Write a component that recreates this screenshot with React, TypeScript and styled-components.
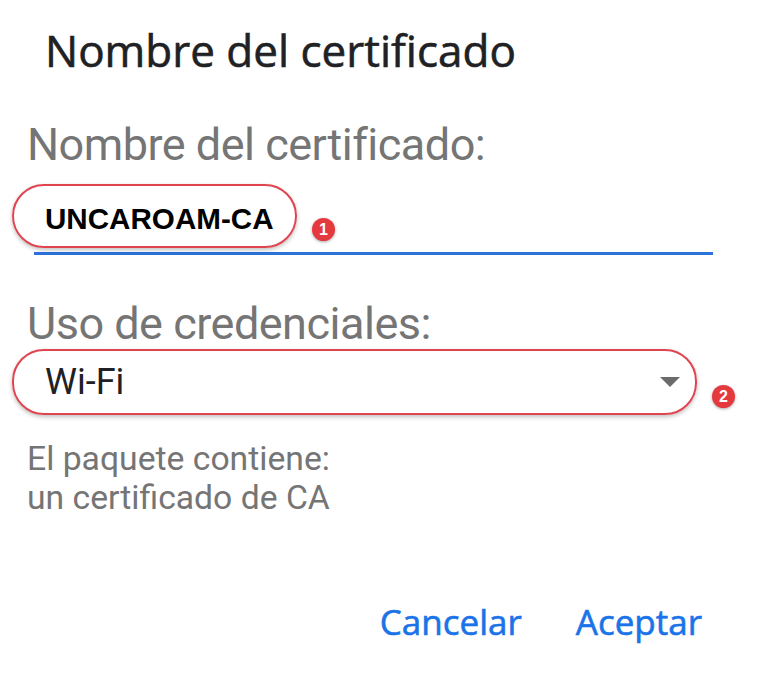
import React from "react";
import styled, { createGlobalStyle } from "styled-components";

const Global = createGlobalStyle`
  html, body { margin: 0; padding: 0; background: #ffffff; }
  body { font-family: Roboto, "Noto Sans", sans-serif; }
`;

const Dialog = styled.div`
  width: 766px;
  height: 673px;
  box-sizing: border-box;
  padding: 22px 0 0 27px;
  display: flex;
  flex-direction: column;
  background: #ffffff;
`;

const Title = styled.h1`
  margin: 0 0 0 18px;
  font-family: "Open Sans", Roboto, sans-serif;
  font-weight: 400;
  font-size: 44px;
  line-height: 56px;
  color: #202124;
  -webkit-text-stroke: 0.6px #202124;
`;

const Label = styled.div<{ $top: number }>`
  margin-top: ${(p) => p.$top}px;
  font-size: 45px;
  line-height: 50px;
  letter-spacing: -0.5px;
  color: #757575;
  font-weight: 400;
`;

const Overlay = styled.div`
  position: relative;
`;

const InputField = styled.div`
  position: relative;
  margin-top: 13px;
  width: 686px;
  height: 72px;
  display: flex;
  align-items: center;
  box-sizing: border-box;
  padding-left: 18px;
`;

const InputText = styled.span`
  font-family: "Liberation Sans", Arial, sans-serif;
  font-weight: 700;
  font-size: 29.6px;
  color: #000;
`;

const Underline = styled.div`
  position: absolute;
  left: 7px;
  right: 0;
  bottom: 0;
  height: 3px;
  background: #2b72db;
`;

const Ring = styled.div<{ $l: number; $t: number; $w: number; $h: number }>`
  position: absolute;
  left: ${(p) => p.$l}px;
  top: ${(p) => p.$t}px;
  width: ${(p) => p.$w}px;
  height: ${(p) => p.$h}px;
  box-sizing: border-box;
  border: 2.5px solid #e0444f;
  border-radius: 32px;
  box-shadow: 0 2px 4px rgba(0, 0, 0, 0.25);
  pointer-events: none;
`;

const Badge = styled.div<{ $l: number; $t: number }>`
  position: absolute;
  left: ${(p) => p.$l}px;
  top: ${(p) => p.$t}px;
  width: 23px;
  height: 23px;
  border-radius: 50%;
  background: #e53940;
  color: #fff;
  font-family: "Liberation Sans", Arial, sans-serif;
  font-weight: 700;
  font-size: 16px;
  display: flex;
  align-items: center;
  justify-content: center;
  box-shadow: 0 1px 3px rgba(0, 0, 0, 0.35);
`;

const SelectField = styled.div`
  width: 670px;
  height: 66px;
  box-sizing: border-box;
  padding: 0 17px 0 18px;
  display: flex;
  align-items: center;
  justify-content: space-between;
`;

const SelectValue = styled.span`
  font-size: 36px;
  color: #202124;
`;

const Info = styled.div`
  margin-top: 24px;
  font-size: 33.7px;
  line-height: 39px;
  color: #757575;
`;

const Actions = styled.div`
  margin-top: 84px;
  width: 675px;
  display: flex;
  justify-content: flex-end;
  gap: 54px;
`;

const ActionButton = styled.button`
  background: none;
  border: none;
  padding: 0;
  font-family: "Open Sans", Roboto, sans-serif;
  font-weight: 400;
  font-size: 35px;
  line-height: 42px;
  color: #1a73e8;
  -webkit-text-stroke: 0.6px #1a73e8;
  cursor: pointer;
`;

export default function App() {
  return (
    <>
      <Global />
      <Dialog>
        <Title>Nombre del certificado</Title>
        <Label $top={42}>Nombre del certificado:</Label>
        <Overlay>
          <InputField>
            <InputText>UNCAROAM-CA</InputText>
            <Underline />
          </InputField>
          <Ring $l={-15} $t={14} $w={285} $h={64} />
          <Badge $l={285} $t={48}>1</Badge>
        </Overlay>
        <Label $top={44}>Uso de credenciales:</Label>
        <Overlay>
          <SelectField>
            <SelectValue>Wi-Fi</SelectValue>
            <svg width="20" height="10" viewBox="0 0 20 10">
              <path d="M0 0 L20 0 L10 10 Z" fill="#6b6b6b" />
            </svg>
          </SelectField>
          <Ring $l={-15} $t={0} $w={685} $h={66} />
          <Badge $l={685} $t={36}>2</Badge>
        </Overlay>
        <Info>
          El paquete contiene:
          <br />
          un certificado de CA
        </Info>
        <Actions>
          <ActionButton>Cancelar</ActionButton>
          <ActionButton>Aceptar</ActionButton>
        </Actions>
      </Dialog>
    </>
  );
}
